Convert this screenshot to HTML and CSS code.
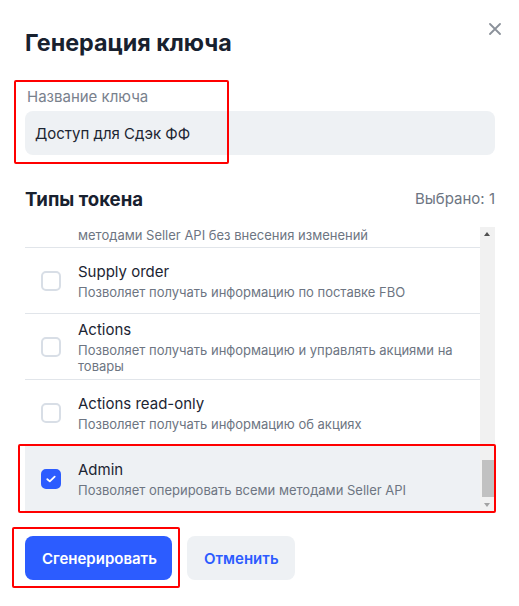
FILE: index.html
```html
<!DOCTYPE html>
<html lang="ru">
<head>
<meta charset="utf-8">
<link rel="stylesheet" href="styles.css">
</head>
<body>
<div class="modal">
  <button class="close" aria-label="Закрыть">
    <svg width="12" height="12" viewBox="0 0 12 12"><path d="M1 1L11 11M11 1L1 11" stroke="#8b919a" stroke-width="1.8" stroke-linecap="round"/></svg>
  </button>
  <h1 class="title">Генерация ключа</h1>

  <div class="field">
    <div class="label">Название ключа</div>
    <div class="input">Доступ для Сдэк ФФ</div>
    <div class="mark mark-field"></div>
  </div>

  <div class="types-head">
    <h2 class="types-title">Типы токена</h2>
    <span class="selected">Выбрано: 1</span>
  </div>

  <div class="list">
    <div class="viewport">
      <div class="rows">
        <div class="row partial">
          <div class="desc">методами Seller API без внесения изменений</div>
        </div>
        <div class="row">
          <span class="cb"></span>
          <div class="txt">
            <div class="name">Supply order</div>
            <div class="desc">Позволяет получать информацию по поставке FBO</div>
          </div>
        </div>
        <div class="row">
          <span class="cb"></span>
          <div class="txt">
            <div class="name">Actions</div>
            <div class="desc">Позволяет получать информацию и управлять акциями на товары</div>
          </div>
        </div>
        <div class="row">
          <span class="cb"></span>
          <div class="txt">
            <div class="name">Actions read-only</div>
            <div class="desc">Позволяет получать информацию об акциях</div>
          </div>
        </div>
        <div class="row active">
          <span class="cb checked">
            <svg width="10" height="8" viewBox="0 0 10 8"><path d="M1.3 4.2L3.8 6.4L8.7 1.6" fill="none" stroke="#fff" stroke-width="1.8" stroke-linecap="round" stroke-linejoin="round"/></svg>
          </span>
          <div class="txt">
            <div class="name">Admin</div>
            <div class="desc">Позволяет оперировать всеми методами Seller API</div>
          </div>
        </div>
      </div>
    </div>
    <div class="scrollbar">
      <span class="arrow up"></span>
      <span class="thumb"></span>
      <span class="arrow down"></span>
    </div>
    <div class="mark mark-row"></div>
  </div>

  <div class="actions">
    <button class="btn primary">Сгенерировать</button>
    <button class="btn secondary">Отменить</button>
    <div class="mark mark-btn"></div>
  </div>
</div>
</body>
</html>
```

FILE: styles.css
```css
* { box-sizing: border-box; }
html, body { margin: 0; padding: 0; background: #fff; }
body {
  font-family: Inter, "Noto Sans", "Liberation Sans", sans-serif;
  color: #1c2533;
}
.modal {
  position: relative;
  width: 519px;
  height: 606px;
  padding: 28px 24px 0 25px;
}
.close {
  position: absolute;
  top: 23px;
  left: 489px;
  width: 12px;
  height: 12px;
  padding: 0;
  border: 0;
  background: none;
  display: flex;
}
.title {
  margin: 0;
  font-size: 23.3px;
  line-height: 30px;
  font-weight: 700;
  color: #18212f;
}
.field {
  position: relative;
  margin-top: 29px;
}
.label {
  font-size: 15px;
  line-height: 20px;
  color: #79818d;
  padding-left: 2px;
}
.input {
  margin-top: 4px;
  height: 44px;
  border-radius: 8px;
  background: #eef1f4;
  display: flex;
  align-items: center;
  padding-left: 10px;
  font-size: 15px;
  color: #1c2533;
}
.mark {
  position: absolute;
  border: 2.5px solid #ff0000;
  border-radius: 2px;
  pointer-events: none;
}
.mark-field { left: -11px; top: -7px; width: 215px; height: 84px; }
.types-head {
  margin-top: 32px;
  display: flex;
  justify-content: space-between;
  align-items: center;
}
.types-title {
  margin: 0;
  font-size: 18.6px;
  line-height: 24px;
  font-weight: 700;
  color: #18212f;
}
.selected {
  font-size: 15px;
  line-height: 20px;
  color: #6d7582;
}
.list {
  position: relative;
  margin-top: 16px;
  display: flex;
  height: 285px;
}
.viewport {
  flex: 1;
  overflow: hidden;
}
.rows { display: flex; flex-direction: column; }
.row {
  display: flex;
  align-items: center;
  min-height: 66px;
  border-bottom: 1px solid #e1e5ea;
  padding-left: 16px;
  gap: 17px;
}
.row.partial {
  min-height: 0;
  height: 21px;
  align-items: flex-start;
  padding-left: 53px;
}
.row.partial .desc { margin-top: 0; }
.row.active {
  background: #eef1f4;
  border-bottom: 0;
}
.cb {
  flex: 0 0 20px;
  width: 20px;
  height: 20px;
  border: 2px solid #d8dee6;
  border-radius: 5px;
  background: #fff;
  display: flex;
  align-items: center;
  justify-content: center;
}
.cb.checked {
  background: #2c5cff;
  border-color: #2c5cff;
}
.txt { padding: 4px 0; }
.name {
  font-size: 15px;
  line-height: 20px;
  color: #1c2533;
}
.desc {
  margin-top: 2px;
  font-size: 13px;
  line-height: 16px;
  color: #6d7582;
  padding-right: 20px;
}
.scrollbar {
  position: relative;
  flex: 0 0 15px;
  width: 15px;
  background: #f1f1f1;
}
.arrow {
  position: absolute;
  left: 4px;
  width: 0;
  height: 0;
  border-left: 3.5px solid transparent;
  border-right: 3.5px solid transparent;
}
.arrow.up { top: 5px; border-bottom: 4px solid #505050; }
.arrow.down { bottom: 5px; border-top: 4px solid #a3a3a3; }
.thumb {
  position: absolute;
  left: 2px;
  right: 1px;
  top: 233px;
  height: 37px;
  background: #c1c1c1;
}
.mark-row { left: -7px; top: 217px; width: 478px; height: 69px; }
.actions {
  position: relative;
  margin-top: 24px;
  display: flex;
  gap: 15px;
}
.btn {
  height: 44px;
  border: 0;
  border-radius: 8px;
  padding: 0 17px;
  font-family: inherit;
  font-size: 15px;
  font-weight: 600;
}
.btn.primary { background: #2c5cff; color: #fff; width: 147px; }
.btn.secondary { background: #eef1f4; color: #2c5cff; width: 108px; }
.mark-btn { left: -13px; top: -9px; width: 168px; height: 61px; }
```
